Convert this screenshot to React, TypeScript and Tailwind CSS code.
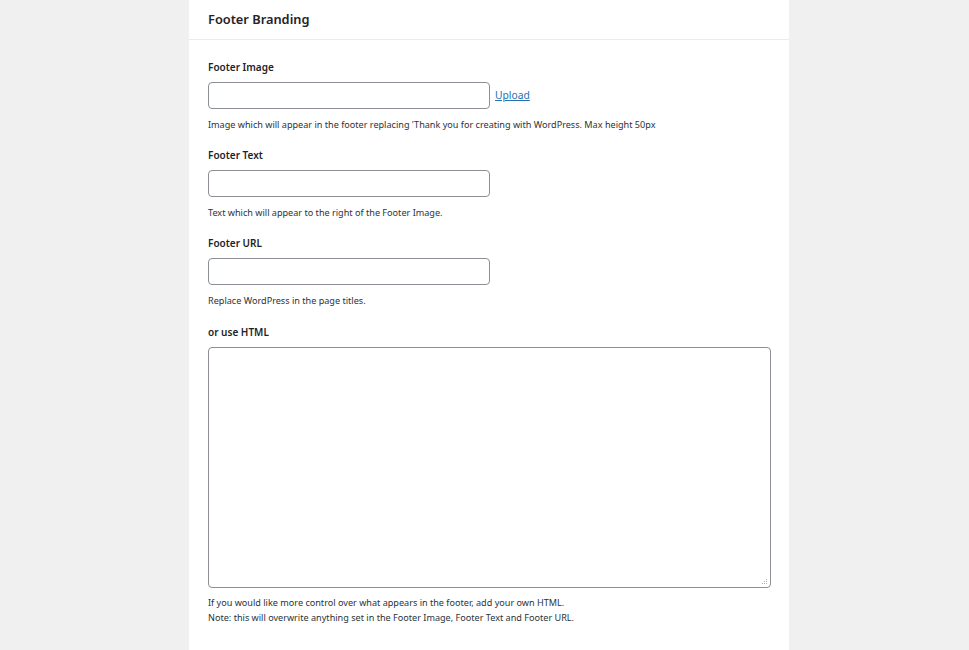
import React from "react";

const font = { fontFamily: '"Noto Sans", "Open Sans", sans-serif' };

function Field({ label, desc, link }: { label: string; desc: string; link?: boolean }) {
  return (
    <div className="flex flex-col">
      <div className="text-[10px] font-semibold text-[#1d2327] leading-[14px]">{label}</div>
      <div className="mt-[8px] flex items-center">
        <div className="w-[282px] h-[27px] rounded-[4px] border border-[#8c8f94] bg-white" />
        {link && (
          <a className="ml-[5px] text-[10.3px] text-[#2271b1] underline leading-none">Upload</a>
        )}
      </div>
      <div className="mt-[10px] text-[9.1px] text-[#2c3338] leading-[12px]">{desc}</div>
    </div>
  );
}

export default function App() {
  return (
    <div className="w-[969px] h-[650px] bg-[#f0f0f1] pl-[189px] overflow-hidden" style={font}>
      <div className="w-[600px] h-full bg-white flex flex-col">
        <div className="h-[40px] border-b border-[#ebebec] flex items-center px-[19px]">
          <div className="text-[12.8px] font-semibold text-[#1d2327]">Footer Branding</div>
        </div>
        <div className="px-[19px] pt-[20px] flex flex-col gap-[17px]">
          <Field
            label="Footer Image"
            link
            desc="Image which will appear in the footer replacing 'Thank you for creating with WordPress. Max height 50px"
          />
          <Field label="Footer Text" desc="Text which will appear to the right of the Footer Image." />
          <Field label="Footer URL" desc="Replace WordPress in the page titles." />
          <div className="flex flex-col mt-[1px]">
            <div className="text-[10px] font-semibold text-[#1d2327] leading-[14px]">or use HTML</div>
            <div className="mt-[8px] relative w-[563px] h-[241px] rounded-[4px] border border-[#8c8f94] bg-white">
              <svg className="absolute right-[2px] bottom-[2px]" width="7" height="7" viewBox="0 0 7 7">
                <rect x="5" y="1" width="1" height="1" fill="#b0b0b0" />
                <rect x="3" y="3" width="1" height="1" fill="#b0b0b0" />
                <rect x="5" y="3" width="1" height="1" fill="#b0b0b0" />
                <rect x="1" y="5" width="1" height="1" fill="#b0b0b0" />
                <rect x="3" y="5" width="1" height="1" fill="#b0b0b0" />
                <rect x="5" y="5" width="1" height="1" fill="#b0b0b0" />
              </svg>
            </div>
            <div className="mt-[7px] text-[9.1px] text-[#2c3338] leading-[15px]">
              <div>If you would like more control over what appears in the footer, add your own HTML.</div>
              <div>Note: this will overwrite anything set in the Footer Image, Footer Text and Footer URL.</div>
            </div>
          </div>
        </div>
      </div>
    </div>
  );
}
